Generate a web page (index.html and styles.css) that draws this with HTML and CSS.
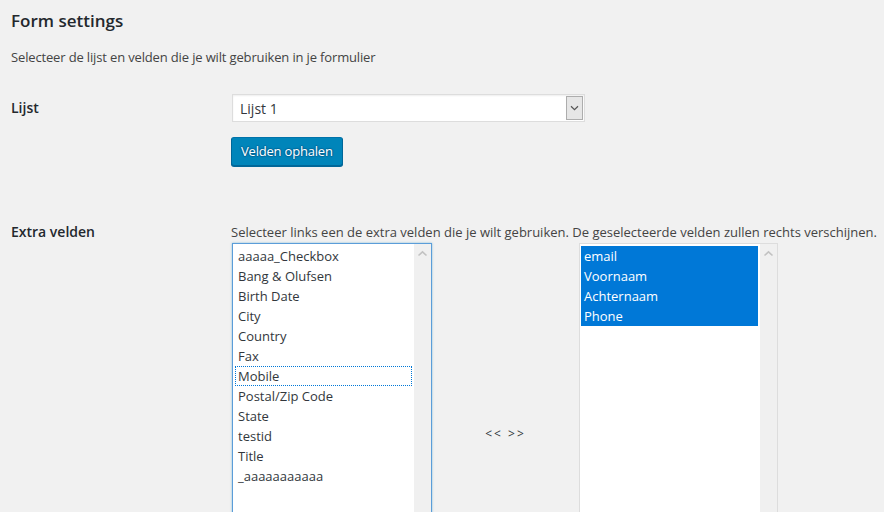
FILE: index.html
```html
<!DOCTYPE html>
<html>
<head>
<meta charset="utf-8">
<link rel="stylesheet" href="styles.css">
</head>
<body>
<div class="wrap">
  <h2 class="title">Form settings</h2>
  <p class="intro">Selecteer de lijst en velden die je wilt gebruiken in je formulier</p>

  <div class="row row-list">
    <div class="label">Lijst</div>
    <div class="field">
      <div class="select">
        <span class="select-value">Lijst 1</span>
        <span class="select-btn">
          <svg width="9" height="6" viewBox="0 0 9 6"><path d="M1 1.2 L4.5 4.6 L8 1.2" fill="none" stroke="#555" stroke-width="1.2"/></svg>
        </span>
      </div>
      <button class="btn-primary">Velden ophalen</button>
    </div>
  </div>

  <div class="row row-extra">
    <div class="label">Extra velden</div>
    <div class="field">
      <p class="desc">Selecteer links een de extra velden die je wilt gebruiken. De geselecteerde velden zullen rechts verschijnen.</p>
      <div class="picker">
        <div class="listbox listbox-left">
          <div class="items">
            <div class="item">aaaaa_Checkbox</div>
            <div class="item">Bang &amp; Olufsen</div>
            <div class="item">Birth Date</div>
            <div class="item">City</div>
            <div class="item">Country</div>
            <div class="item">Fax</div>
            <div class="item item-focus">Mobile</div>
            <div class="item">Postal/Zip Code</div>
            <div class="item">State</div>
            <div class="item">testid</div>
            <div class="item">Title</div>
            <div class="item">_aaaaaaaaaaa</div>
          </div>
          <div class="scroll">
            <svg width="11" height="7" viewBox="0 0 11 7"><path d="M1.5 5.5 L5.5 1.8 L9.5 5.5" fill="none" stroke="#c2c2c2" stroke-width="1.6"/></svg>
          </div>
        </div>
        <div class="arrows">&lt;&lt; &gt;&gt;</div>
        <div class="listbox listbox-right">
          <div class="items">
            <div class="item item-sel">email</div>
            <div class="item item-sel">Voornaam</div>
            <div class="item item-sel">Achternaam</div>
            <div class="item item-sel">Phone</div>
          </div>
          <div class="scroll">
            <svg width="11" height="7" viewBox="0 0 11 7"><path d="M1.5 5.5 L5.5 1.8 L9.5 5.5" fill="none" stroke="#c2c2c2" stroke-width="1.6"/></svg>
          </div>
        </div>
      </div>
    </div>
  </div>
</div>
</body>
</html>
```

FILE: styles.css
```css
html, body {
  margin: 0;
  padding: 0;
  background: #f1f1f1;
}
body {
  font-family: "Open Sans", "Noto Sans", "DejaVu Sans", sans-serif;
  font-size: 13px;
  color: #444;
  overflow: hidden;
}
.wrap {
  padding: 10px 0 0 11px;
}
.title {
  margin: 0;
  font-size: 17px;
  line-height: 22px;
  font-weight: 600;
  color: #23282d;
}
.intro {
  margin: 16px 0 0 0;
  line-height: 18px;
  color: #444;
  letter-spacing: -0.15px;
}
.row {
  display: flex;
}
.label {
  width: 220px;
  flex: none;
  font-size: 14px;
  font-weight: 600;
  color: #23282d;
  line-height: 20px;
}
.row-list {
  margin-top: 28px;
}
.row-list .label {
  padding-top: 4px;
}
.field {
  display: flex;
  flex-direction: column;
  align-items: flex-start;
}
.select {
  box-sizing: border-box;
  width: 353px;
  height: 28px;
  margin-left: 1px;
  background: #fff;
  border: 1px solid #ddd;
  box-shadow: inset 0 1px 2px rgba(0,0,0,.07);
  display: flex;
  align-items: center;
  justify-content: space-between;
  padding: 0 1px 0 7px;
  color: #32373c;
  font-size: 14px;
}
.select-btn {
  box-sizing: border-box;
  width: 17px;
  height: 24px;
  background: #e6e6e6;
  border: 1px solid #adadad;
  display: flex;
  align-items: center;
  justify-content: center;
}
.btn-primary {
  margin-top: 15px;
  box-sizing: border-box;
  height: 29px;
  padding: 0 9px 1px;
  white-space: nowrap;
  background: #0085ba;
  border: 1px solid #0073aa;
  border-color: #0073aa #006799 #006799;
  border-radius: 3px;
  box-shadow: 0 1px 0 #006799;
  color: #fff;
  font-family: inherit;
  font-size: 13px;
  letter-spacing: -0.2px;
  text-shadow: 0 -1px 1px #006799, 1px 0 1px #006799, 0 1px 1px #006799, -1px 0 1px #006799;
}
.row-extra {
  margin-top: 56px;
}
.desc {
  margin: 0;
  line-height: 20px;
  color: #444;
}
.picker {
  display: flex;
  align-items: center;
  margin-top: 1px;
  margin-left: 1px;
}
.listbox {
  box-sizing: border-box;
  width: 200px;
  height: 380px;
  background: #fff;
  border: 1px solid #ddd;
  display: flex;
  align-self: flex-start;
}
.listbox-left {
  border-color: #5b9dd9;
  box-shadow: 0 0 2px rgba(30,140,190,.5);
}
.listbox-right {
  width: 199px;
}
.items {
  flex: 1;
  padding: 2px 2px;
  color: #32373c;
  font-size: 13px;
}
.listbox-right .items {
  padding: 2px 2px 2px 1px;
}
.item {
  box-sizing: border-box;
  height: 20px;
  line-height: 20px;
  padding: 0 3px;
  white-space: nowrap;
}
.item-focus {
  outline: 1px dotted #0078d7;
  outline-offset: -1px;
}
.item-sel {
  background: #0078d7;
  color: #fff;
}
.scroll {
  width: 17px;
  flex: none;
  background: #f0f0f0;
  display: flex;
  justify-content: center;
  padding-top: 6px;
  box-sizing: border-box;
}
.scroll svg {
  display: block;
}
.arrows {
  width: 147px;
  text-align: center;
  color: #32373c;
  letter-spacing: 2px;
  font-size: 12px;
}
```
